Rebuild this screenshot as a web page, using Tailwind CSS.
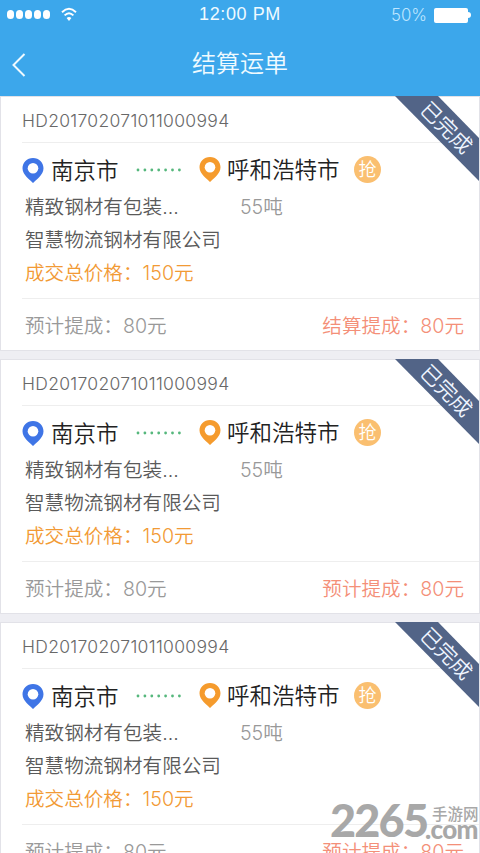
<!DOCTYPE html>
<html lang="zh-CN">
<head>
<meta charset="utf-8">
<title>结算运单</title>
<script src="https://cdn.jsdelivr.net/npm/@tailwindcss/browser@4"></script>
</head>
<body class="relative h-[853px] w-[480px] overflow-hidden bg-[#eeeef3] font-['Inter','Noto_Sans_CJK_SC',sans-serif] font-[350]">
<header class="h-24 bg-[#3ca7eb] text-[#effaff]">
  <div class="grid h-7 grid-cols-3 items-center">
    <div class="flex items-center gap-[11px] pl-[7px]">
      <div class="flex gap-[2px]">
        <i class="h-[9px] w-[7px] rounded-full bg-white"></i><i class="h-[9px] w-[7px] rounded-full bg-white"></i><i class="h-[9px] w-[7px] rounded-full bg-white"></i><i class="h-[9px] w-[7px] rounded-full bg-white"></i><i class="h-[9px] w-[7px] rounded-full bg-white"></i>
      </div>
      <svg class="h-[15px] w-4" viewBox="0 0 16 15" fill="none" stroke="#fff" stroke-width="1.9"><path d="M1 5.2Q8-1.6 15 5.2M3.6 8.4Q8 4 12.4 8.4"/><path d="M5.6 11Q8 8.8 10.4 11L8 14Z" fill="#fff" stroke="none"/></svg>
    </div>
    <div class="text-center font-['Liberation_Sans',sans-serif] text-[18px] leading-7 tracking-[0.6px]">12:00 PM</div>
    <div class="flex items-center justify-end pt-[2px] pr-[9px]">
      <span class="mr-[7px] font-['Inter',sans-serif] text-[16.8px] leading-6 font-light text-[#bfe6ff]">50%</span>
      <i class="h-[15px] w-[34px] rounded-[2px] bg-white"></i><i class="h-[6px] w-[3px] rounded-r-full bg-white"></i>
    </div>
  </div>
  <div class="grid h-[68px] grid-cols-[48px_1fr_48px] items-center">
    <svg class="mt-[5px] ml-[12px] h-6 w-[14px]" viewBox="0 0 14 24" fill="none" stroke="#effaff" stroke-width="2"><path d="M12.5 1L1.5 12L12.5 23"/></svg>
    <h1 class="pt-[4px] text-center text-[24px] leading-9 font-[350]">结算运单</h1>
  </div>
</header>
<main id="orders" class="flex flex-col gap-2"></main>
<div class="absolute top-[802px] left-[330px] flex h-[36px] w-[150px] items-start text-[#a8a8a8]">
  <span class="w-[95px] shrink-0 font-['Lato',sans-serif] text-[45px] leading-[36px] font-black tracking-[-1.8px]">2265</span>
  <div class="flex flex-col">
    <span class="pt-[2px] pl-[7px] font-['Noto_Sans_CJK_SC',sans-serif] text-[15.5px] leading-[18px] font-medium whitespace-nowrap">手游网</span>
    <span class="font-['Lato',sans-serif] text-[26px] leading-[14px] font-black tracking-[-0.7px]">.com</span>
  </div>
</div>
<script>
const card = label => `
<article class="relative h-[255px] shrink-0 border border-[#e2e2e8] bg-white">
  <div class="ml-[21px] flex h-[46px] items-center border-b border-[#eeeeee] pt-[3px] text-[17.5px] text-[#686868]"><span class="tracking-[0.31px]">HD201702071011000994</span></div>
  <div class="ml-[21px] flex h-[54px] items-center text-[22.5px] leading-8 text-[#222]">
    <svg class="mt-[1px] h-[25px] w-[22px]" viewBox="0 0 22 25"><path d="M11 0C4.9 0 .5 4.6.5 10.3C.5 17 8 21.8 11 25C14 21.8 21.5 17 21.5 10.3C21.5 4.6 17.1 0 11 0Z" fill="#3f75e6"/><circle cx="11" cy="10.2" r="5.3" fill="#fff"/></svg>
    <span class="ml-[7px] w-[85px] pt-px">南京市</span>
    <svg class="h-1 w-[46px]" viewBox="0 0 46 4" fill="#55b77c"><circle cx="2" cy="2" r="1.4"/><circle cx="8.9" cy="2" r="1.4"/><circle cx="15.8" cy="2" r="1.4"/><circle cx="22.7" cy="2" r="1.4"/><circle cx="29.6" cy="2" r="1.4"/><circle cx="36.5" cy="2" r="1.4"/><circle cx="43.4" cy="2" r="1.4"/></svg>
    <svg class="-mt-[1px] ml-[17px] h-[25px] w-[22px]" viewBox="0 0 22 25"><path d="M11 0C4.9 0 .5 4.6.5 10.3C.5 17 8 21.8 11 25C14 21.8 21.5 17 21.5 10.3C21.5 4.6 17.1 0 11 0Z" fill="#f59b2d"/><circle cx="11" cy="10.2" r="5.3" fill="#fff"/></svg>
    <span class="ml-[6px] w-[127px]">呼和浩特市</span>
    <span class="-mt-px flex h-[27px] w-[27px] items-center justify-center rounded-full bg-[#fabf70] pt-px text-[18px] text-white">抢</span>
  </div>
  <div class="-mt-[6px] ml-[24px] text-[19.6px] leading-[33px] text-[#5a5a5a]">
    <div class="flex"><span class="w-[215px]">精致钢材有包装...</span><span class="text-[#999]">55吨</span></div>
    <div>智慧物流钢材有限公司</div>
    <div class="text-[#f29a35]">成交总价格：150元</div>
  </div>
  <div class="mt-[8px] ml-[21px] flex h-[53px] items-center justify-between border-t border-[#eeeeee] pt-[3px] pr-[15px] pl-[3px] text-[19.6px] text-[#999]">
    <span>预计提成：80元</span><span class="text-[#f48f78]">${label}：80元</span>
  </div>
  <div class="absolute -top-px -right-px h-[85px] w-[85px] overflow-hidden">
    <svg class="absolute inset-0" width="85" height="85" viewBox="0 0 85 85"><path d="M0 0H43L84 42V85Z" fill="#526487"/></svg>
    <span class="absolute top-[18px] left-[11px] w-20 rotate-45 text-center text-[21px] leading-7 text-[#eff5ff]">已完成</span>
  </div>
</article>`;
document.getElementById('orders').innerHTML = ['结算提成', '预计提成', '预计提成'].map(card).join('');
</script>
</body>
</html>
